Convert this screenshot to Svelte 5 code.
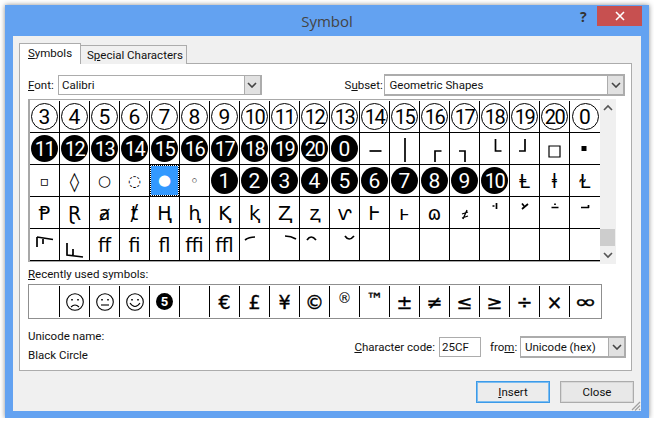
<script>
  const ring = [3, 4, 5, 6, 7, 8, 9, 10, 11, 12, 13, 14, 15, 16, 17, 18, 19, 20, 0];
  const solid = [11, 12, 13, 14, 15, 16, 17, 18, 19, 20, 0];

  // marks that have no usable glyph in the installed fonts, drawn in a 30x32 cell
  const marks = {
    hbar: 'M9.500 18h12',
    vbar: 'M15 5v24',
    tl: 'M15 29V18h6.500',
    tr: 'M9 18h6v11',
    bl: 'M15.500 6v12h6',
    br: 'M9 18h6V6',
    box: 'M9 13h11v11H9z',
    blob: 'M11.500 15.500h5',
    neq: 'M12 17l6-2M12 21l6-2M17 13l-4 9',
    t1: 'M16.500 6v6M12.500 9h2',
    t2: 'M12 6.500l2 2.500M18 7l-6 5',
    t3: 'M11.500 10.500h7M15 6.500v1.500',
    t4: 'M11 10.500h8M18.500 8v3',
    hook1: 'M7 8v10M7 8l16 2.500M13 10v5',
    hook2: 'M7 14v12l16 2M13 20v6',
    b1: 'M5 11q4-3 10-3',
    b2: 'M15 7q6 0 11 3',
    b3: 'M7 11q4-6 9 0',
    b4: 'M15 7q4 6 9 0'
  };

  const mark = (d, w) => ({ kind: 'mark', d, w });
  const glyph = (text, cls) => ({ kind: 'glyph', text, cls });

  const row1 = ring.map((n) => ({ kind: 'ring', text: n }));
  const row2 = [
    ...solid.map((n) => ({ kind: 'solid', text: n })),
    mark(marks.hbar),
    mark(marks.vbar),
    mark(marks.tl),
    mark(marks.tr),
    mark(marks.bl),
    mark(marks.br),
    mark(marks.box, 1.2),
    mark(marks.blob, 5)
  ];
  const row3 = [
    glyph('▫', 'small'),
    glyph('◊'),
    glyph('○', 'mid'),
    glyph('◌', 'mid'),
    glyph('●', 'picked'),
    glyph('◦', 'mid'),
    ...[1, 2, 3, 4, 5, 6, 7, 8, 9, 10].map((n) => ({ kind: 'solid', text: n })),
    glyph('Ⱡ'),
    glyph('ⱡ'),
    glyph('Ɫ')
  ];
  const row4 = [
    ...['Ᵽ', 'Ɽ', 'ⱥ', 'ⱦ', 'Ⱨ', 'ⱨ', 'Ⱪ', 'ⱪ', 'Ⱬ', 'ⱬ', 'ⱱ', 'Ⱶ', 'ⱶ', 'ɷ'].map((t) => glyph(t)),
    mark(marks.neq, 1.3),
    mark(marks.t1),
    mark(marks.t2),
    mark(marks.t3),
    mark(marks.t4)
  ];
  const row5 = [
    mark(marks.hook1),
    mark(marks.hook2),
    ...['ﬀ', 'ﬁ', 'ﬂ', 'ﬃ', 'ﬄ'].map((t) => glyph(t)),
    mark(marks.b1),
    mark(marks.b2),
    mark(marks.b3),
    mark(marks.b4),
    ...Array.from({ length: 8 }, () => ({ kind: 'empty' }))
  ];
  const cells = [...row1, ...row2, ...row3, ...row4, ...row5];

  const recent = [
    { kind: 'blank' },
    { kind: 'face', mouth: 'M5 14q4-4 8 0' },
    { kind: 'face', mouth: 'M5 12h8' },
    { kind: 'face', mouth: 'M4 10q5 7 10 0' },
    { kind: 'disc', text: '5' },
    { kind: 'blank' },
    { text: '€' },
    { text: '£' },
    { text: '¥' },
    { text: '©', cls: 'big' },
    { text: '®', cls: 'reg' },
    { text: '™', cls: 'tm' },
    { text: '±' },
    { text: '≠' },
    { text: '≤' },
    { text: '≥' },
    { text: '÷' },
    { text: '×' },
    { text: '∞', cls: 'inf' }
  ];
</script>

{#snippet arrow()}
  <span class="drop"><svg width="10" height="6" viewBox="0 0 10 6"><path d="M1 1l4 4 4-4" stroke="#444" stroke-width="1.6" fill="none" /></svg></span>
{/snippet}

<div class="window">
  <header class="titlebar">
    <span class="title">Symbol</span>
    <span class="help">?</span>
    <span class="close">
      <svg width="10" height="10" viewBox="0 0 10 10"><path d="M1 1l8 8M9 1l-8 8" stroke="#fff" stroke-width="1.6" fill="none" /></svg>
    </span>
  </header>

  <div class="client">
    <div class="tabs">
      <div class="tab active"><u>S</u>ymbols</div>
      <div class="tab">S<u>p</u>ecial Characters</div>
    </div>

    <div class="page">
      <div class="pickers">
        <label class="font-label" for="font"><u>F</u>ont:</label>
        <div class="select font-select" id="font">
          <span>Calibri</span>
          {@render arrow()}
        </div>
        <label class="subset-label" for="subset">S<u>u</u>bset:</label>
        <div class="select wide-select subset-select" id="subset">
          <span>Geometric Shapes</span>
          {@render arrow()}
        </div>
      </div>

      <div class="chart">
        <div class="grid">
          {#each cells as c}
            <div class="cell">
              {#if c.kind === 'ring'}
                <span class="disc ring" class:two={c.text > 9}>{c.text}</span>
              {:else if c.kind === 'solid'}
                <span class="disc solid" class:two={c.text > 9}>{c.text}</span>
              {:else if c.kind === 'mark'}
                <svg class="mark" width="30" height="32" viewBox="0 0 30 32"><path d={c.d} stroke="#000" stroke-width={c.w || 1.7} fill="none" /></svg>
              {:else if c.kind === 'glyph'}
                <span class="glyph {c.cls || ''}">{c.text}</span>
              {/if}
            </div>
          {/each}
        </div>
        <div class="scrollbar">
          <svg class="arrow" width="16" height="16" viewBox="0 0 16 16"><path d="M4 11l4-4 4 4" stroke="#555" stroke-width="1.6" fill="none" /></svg>
          <div class="track"><div class="thumb"></div></div>
          <svg class="arrow" width="16" height="16" viewBox="0 0 16 16"><path d="M4 5l4 4 4-4" stroke="#555" stroke-width="1.6" fill="none" /></svg>
        </div>
      </div>

      <div class="recent-label"><u>R</u>ecently used symbols:</div>
      <div class="recent">
        {#each recent as s}
          <div class="recent-cell">
            {#if s.kind === 'face'}
              <svg width="18" height="18" viewBox="0 0 18 18" fill="none" stroke="#000" stroke-width="1.1">
                <circle cx="9" cy="9" r="8.300" />
                <path d="M6 6v1.600M12 6v1.600" stroke-width="1.600" />
                <path d={s.mouth} />
              </svg>
            {:else if s.kind === 'disc'}
              <span class="mini-disc">{s.text}</span>
            {:else if s.text}
              <span class={s.cls || ''}>{s.text}</span>
            {/if}
          </div>
        {/each}
      </div>

      <div class="info">
        <div class="names">
          <div>Unicode name:</div>
          <div>Black Circle</div>
        </div>
        <div class="code">
          <label for="cc"><u>C</u>haracter code:</label>
          <div class="code-input" id="cc">25CF</div>
          <label class="from" for="from">fro<u>m</u>:</label>
          <div class="select wide-select from-select" id="from">
            <span>Unicode (hex)</span>
            {@render arrow()}
          </div>
        </div>
      </div>
    </div>

    <div class="actions">
      <button class="primary"><u>I</u>nsert</button>
      <button>Close</button>
    </div>
    <svg class="grip" width="10" height="10" viewBox="0 0 10 10"><path d="M9 1l-8 8M9 4.500l-5 5M9 8l-1 1" stroke="#a0a0a0" stroke-width="1.2" fill="none" /></svg>
  </div>
</div>

<style>
  :global(body) {
    margin: 0;
    background: #fff;
  }

  .window {
    box-sizing: border-box;
    width: 644px;
    height: 413px;
    margin: 5px 0 0 5px;
    background: #63a2f1;
    box-shadow: 0 0 5px rgba(0, 0, 0, 0.45);
    display: flex;
    flex-direction: column;
    font: 11.5px Roboto, sans-serif;
    color: #111;
  }

  .titlebar {
    position: relative;
    height: 31px;
    flex: none;
    display: flex;
    align-items: center;
    justify-content: center;
  }

  .title {
    font: 15px "Open Sans", sans-serif;
    color: #444;
  }

  .help {
    position: absolute;
    left: 575px;
    top: 2px;
    font: bold 14px "Open Sans", sans-serif;
    color: #333;
  }

  .close {
    position: absolute;
    left: 592px;
    top: 1px;
    width: 45px;
    height: 20px;
    background: #c75050;
    display: flex;
    align-items: center;
    justify-content: center;
  }

  .client {
    position: relative;
    flex: 1;
    margin: 0 8px 7px;
    padding: 7px 9px 0 6px;
    background: #f0f0f0;
    display: flex;
    flex-direction: column;
  }

  .tabs {
    display: flex;
    align-items: flex-end;
    height: 21px;
    position: relative;
    z-index: 1;
    margin-bottom: -1px;
  }

  .tab {
    box-sizing: border-box;
    width: 107px;
    height: 19px;
    padding: 0 6px;
    line-height: 18px;
    white-space: nowrap;
    border: 1px solid #acacac;
    border-bottom: none;
    margin-left: -1px;
    background: #f0f0f0;
  }

  .tab.active {
    margin-left: 0;
    height: 21px;
    width: 62px;
    padding: 0 8px;
    background: #fff;
  }

  .page {
    box-sizing: border-box;
    height: 308px;
    background: #fff;
    border: 1px solid #acacac;
    padding: 10px 6px 0 8px;
  }

  .pickers {
    display: flex;
    align-items: center;
    height: 22px;
  }

  .font-label {
    width: 30px;
  }

  .subset-label {
    margin-left: 83px;
    width: 40px;
  }

  .select {
    box-sizing: border-box;
    height: 20px;
    border: 1px solid #acacac;
    display: flex;
    align-items: center;
    justify-content: space-between;
    padding-left: 3px;
    background: #fff;
  }

  .wide-select {
    height: 22px;
    border-width: 2px 2px 2px 1px;
    padding-left: 4px;
  }

  .drop {
    box-sizing: border-box;
    width: 16px;
    height: 100%;
    flex: none;
    background: #e1e1e1;
    border-left: 1px solid #acacac;
    display: flex;
    align-items: center;
    justify-content: center;
  }

  .font-select {
    width: 204px;
    border-right-width: 2px;
  }

  .subset-select {
    width: 241px;
  }

  .chart {
    display: flex;
    margin-top: 3px;
  }

  .grid {
    box-sizing: border-box;
    width: 572px;
    height: 163px;
    flex: none;
    display: grid;
    grid-template-columns: repeat(19, 30px);
    grid-auto-rows: 32px;
    border: solid #a8a8a8;
    border-width: 1px 0 2px 2px;
    padding-top: 1px;
  }

  .cell {
    box-sizing: border-box;
    border-right: 1px solid #000;
    border-bottom: 1px solid #000;
    display: flex;
    align-items: center;
    justify-content: center;
    position: relative;
    color: #000;
    overflow: hidden;
  }

  .cell:nth-child(19n) {
    border-right: none;
  }

  .disc {
    box-sizing: border-box;
    flex: none;
    width: 27px;
    height: 27px;
    border-radius: 50%;
    display: flex;
    align-items: center;
    justify-content: center;
    font: 21px Roboto, sans-serif;
  }

  .disc.two {
    font-size: 20px;
    letter-spacing: -1.5px;
  }

  .ring {
    border: 1.5px solid #000;
  }

  .solid {
    background: #000;
    color: #fff;
  }

  .mark {
    position: absolute;
    left: 0;
    top: 0;
  }

  .glyph {
    font: 19px "DejaVu Sans", sans-serif;
  }

  .glyph.small {
    font-size: 14px;
  }

  .glyph.mid {
    font-size: 15px;
  }

  .glyph.picked {
    align-self: stretch;
    flex: 1;
    margin: 1px;
    background: #3399ff;
    color: #fff;
    font-size: 15px;
    text-align: center;
    line-height: 28px;
    outline: 1px dotted #000;
  }

  .scrollbar {
    width: 16px;
    height: 165px;
    flex: none;
    background: #f0f0f0;
    display: flex;
    flex-direction: column;
  }

  .arrow {
    flex: none;
  }

  .track {
    flex: 1;
    display: flex;
    flex-direction: column;
    justify-content: flex-end;
  }

  .thumb {
    height: 17px;
    margin: 0 1px 2px 0;
    background: #cdcdcd;
  }

  .recent-label {
    margin-top: 2px;
    height: 17px;
    line-height: 17px;
  }

  .recent {
    box-sizing: border-box;
    width: 574px;
    height: 35px;
    margin-top: 1px;
    border: 1px solid #8f8f8f;
    display: grid;
    grid-template-columns: repeat(19, 30px);
    padding: 1px 0 1px 1px;
  }

  .recent-cell {
    border-right: 1px solid #000;
    display: flex;
    align-items: center;
    justify-content: center;
    font: 19px "DejaVu Sans", sans-serif;
    -webkit-text-stroke: 0.4px #000;
    color: #000;
  }

  .recent-cell:last-child {
    border-right: none;
  }

  .mini-disc {
    width: 17px;
    height: 17px;
    border-radius: 50%;
    background: #000;
    color: #fff;
    -webkit-text-stroke: 0;
    font: bold 13px Roboto, sans-serif;
    display: flex;
    align-items: center;
    justify-content: center;
  }

  .big {
    font-size: 19px;
  }

  .reg {
    font-size: 14px;
    -webkit-text-stroke: 0;
    position: relative;
    top: -4px;
  }

  .tm {
    font-size: 17px;
    position: relative;
    top: -3px;
  }

  .inf {
    display: inline-block;
    font-size: 18px;
    transform: scaleX(1.5);
  }

  .info {
    display: flex;
    justify-content: space-between;
    margin-top: 8px;
  }

  .names {
    line-height: 19px;
  }

  .code {
    display: flex;
    align-items: center;
    height: 22px;
    margin-right: -1px;
    margin-top: 9px;
  }

  .code-input {
    box-sizing: border-box;
    width: 42px;
    height: 20px;
    margin-left: 4px;
    border: 1px solid #acacac;
    padding-left: 2px;
    line-height: 18px;
  }

  .from {
    width: 27px;
    margin-left: 9px;
    margin-right: 3px;
  }

  .from-select {
    width: 106px;
  }

  .actions {
    display: flex;
    justify-content: flex-end;
    gap: 10px;
    margin-top: 10px;
    margin-right: -2px;
  }

  button {
    box-sizing: border-box;
    width: 74px;
    height: 22px;
    border: 1px solid #acacac;
    box-shadow: inset 0 0 0 1px #d8d8d8;
    background: #e8e8e8;
    color: #111;
    font: 11.5px Roboto, sans-serif;
    padding: 0;
  }

  button.primary {
    border: 1px solid #3c9ae8;
    box-shadow: inset 0 0 0 1px #7bbcf0;
    background: #ececec;
  }

  .grip {
    position: absolute;
    right: 0;
    bottom: 0;
  }
</style>
